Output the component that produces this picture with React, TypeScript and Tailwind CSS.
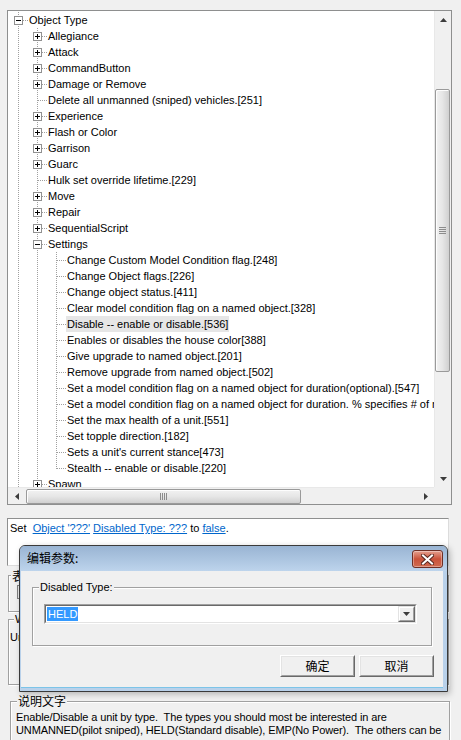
import React from "react";

type Row = { t: string; l: number; e?: "plus" | "minus"; last?: boolean; sel?: boolean };

const level2 = [
  "Change Custom Model Condition flag.[248]",
  "Change Object flags.[226]",
  "Change object status.[411]",
  "Clear model condition flag on a named object.[328]",
  "Disable -- enable or disable.[536]",
  "Enables or disables the house color[388]",
  "Give upgrade to named object.[201]",
  "Remove upgrade from named object.[502]",
  "Set a model condition flag on a named object for duration(optional).[547]",
  "Set a model condition flag on a named object for duration. % specifies # of repetitions.[548]",
  "Set the max health of a unit.[551]",
  "Set topple direction.[182]",
  "Sets a unit's current stance[473]",
  "Stealth -- enable or disable.[220]",
];

const rows: Row[] = [
  { t: "Object Type", l: 0, e: "minus" },
  { t: "Allegiance", l: 1, e: "plus" },
  { t: "Attack", l: 1, e: "plus" },
  { t: "CommandButton", l: 1, e: "plus" },
  { t: "Damage or Remove", l: 1, e: "plus" },
  { t: "Delete all unmanned (sniped) vehicles.[251]", l: 1 },
  { t: "Experience", l: 1, e: "plus" },
  { t: "Flash or Color", l: 1, e: "plus" },
  { t: "Garrison", l: 1, e: "plus" },
  { t: "Guarc", l: 1, e: "plus" },
  { t: "Hulk set override lifetime.[229]", l: 1 },
  { t: "Move", l: 1, e: "plus" },
  { t: "Repair", l: 1, e: "plus" },
  { t: "SequentialScript", l: 1, e: "plus" },
  { t: "Settings", l: 1, e: "minus" },
  ...level2.map((t, i) => ({
    t,
    l: 2,
    last: i === level2.length - 1,
    sel: i === 4,
  })),
  { t: "Spawn", l: 1, e: "plus" },
];

const DOT = { stroke: "#a0a0a0", strokeDasharray: "1 1", shapeRendering: "crispEdges" as const };

function Cell({ kind, exp }: { kind: "pass" | "tee" | "elbow"; exp?: "plus" | "minus" }) {
  return (
    <svg width={19} height={16} className="block shrink-0">
      {kind === "pass" && <line x1="9.5" y1="0" x2="9.5" y2="16" {...DOT} />}
      {kind !== "pass" && (
        <>
          <line x1="9.5" y1="0" x2="9.5" y2={kind === "tee" ? 16 : 9} {...DOT} />
          <line x1="10" y1="8.5" x2="19" y2="8.5" {...DOT} />
        </>
      )}
      {exp && (
        <>
          <rect x="5.5" y="4.5" width="8" height="8" fill="#fff" stroke="#919191" shapeRendering="crispEdges" />
          <line x1="7" y1="8.5" x2="12" y2="8.5" stroke="#000" shapeRendering="crispEdges" />
          {exp === "plus" && <line x1="9.5" y1="6" x2="9.5" y2="11" stroke="#000" shapeRendering="crispEdges" />}
        </>
      )}
    </svg>
  );
}

function TreeRow({ r }: { r: Row }) {
  const cells = [];
  for (let i = 0; i < r.l; i++) cells.push(<Cell key={i} kind="pass" />);
  cells.push(<Cell key="own" kind={r.last ? "elbow" : "tee"} exp={r.e} />);
  return (
    <div className="flex h-4 items-stretch whitespace-nowrap">
      {cells}
      <span className={`px-px leading-[16px] ${r.sel ? "bg-[#e6e6e6]" : ""}`}>{r.t}</span>
    </div>
  );
}

function Tri({ dir }: { dir: "up" | "down" | "left" | "right" }) {
  const pts =
    dir === "up"
      ? "0,4 7,4 3.5,0"
      : dir === "down"
      ? "0,0 7,0 3.5,4"
      : dir === "left"
      ? "4,0 4,7 0,3.5"
      : "0,0 0,7 4,3.5";
  const w = dir === "up" || dir === "down" ? 7 : 4;
  const h = dir === "up" || dir === "down" ? 4 : 7;
  return (
    <svg width={w} height={h} className="block">
      <polygon points={pts} fill="#3c3c3c" />
    </svg>
  );
}

function VScroll() {
  return (
    <div className="flex flex-col w-[17px] bg-[#f0f0f0] border-l border-[#e8e8e8]">
      <div className="h-[17px] flex items-center justify-center">
        <Tri dir="up" />
      </div>
      <div className="flex-1 flex flex-col">
        <div className="h-[61px]" />
        <div className="h-[283px] w-[15px] rounded-[2px] border border-[#9a9a9a] bg-gradient-to-r from-[#f2f2f2] via-[#e6e6e6] to-[#d0d0d0] shadow-[inset_1px_1px_0_#fdfdfd] flex items-center justify-center">
          <svg width={7} height={8} className="block">
            {[0, 2, 4, 6].map((y) => (
              <line key={y} x1="0" y1={y + 0.5} x2="7" y2={y + 0.5} stroke="#8c8c8c" />
            ))}
          </svg>
        </div>
      </div>
      <div className="h-[17px] flex items-center justify-center">
        <Tri dir="down" />
      </div>
    </div>
  );
}

function HScroll() {
  return (
    <div className="flex h-[17px] bg-[#f0f0f0] border-t border-[#e8e8e8]">
      <div className="w-[17px] flex items-center justify-center">
        <Tri dir="left" />
      </div>
      <div className="flex-1 flex items-center">
        <div className="ml-px w-[275px] h-[15px] rounded-[2px] border border-[#9a9a9a] bg-gradient-to-b from-[#f2f2f2] via-[#e6e6e6] to-[#d0d0d0] shadow-[inset_1px_1px_0_#fdfdfd] flex items-center justify-center">
          <svg width={8} height={7} className="block">
            {[0, 2, 4, 6].map((x) => (
              <line key={x} x1={x + 0.5} y1="0" x2={x + 0.5} y2="7" stroke="#8c8c8c" />
            ))}
          </svg>
        </div>
      </div>
      <div className="w-[17px] flex items-center justify-center">
        <Tri dir="right" />
      </div>
    </div>
  );
}

function TreeBox() {
  return (
    <div className="w-[445px] h-[495px] border border-[#8e8f8f] bg-white grid grid-cols-[426px_17px] grid-rows-[476px_17px]">
      <div className="overflow-hidden pt-px pl-px">
        {rows.map((r, i) => (
          <TreeRow key={i} r={r} />
        ))}
      </div>
      <VScroll />
      <HScroll />
      <div className="bg-[#f0f0f0]" />
    </div>
  );
}

const CJK = "font-['Noto_Sans_CJK_SC',sans-serif]";

function Dialog() {
  return (
    <div className="absolute left-[19px] top-[545px] w-[429px] h-[147px] border border-[#3a3a3a] rounded-t-[6px] bg-[#b9d1ea] flex flex-col shadow-[2px_2px_6px_rgba(0,0,0,0.25)]">
      <div className="h-[25px] flex items-start rounded-t-[5px] bg-gradient-to-b from-[#99b4d3] to-[#bdd4ec]">
        <div className={`${CJK} text-[12px] leading-[16px] mt-[4px] ml-[7px] text-black`}>编辑参数:</div>
        <div className="ml-auto mr-[4px] mt-[4px] w-[31px] h-[18px] rounded-[3px] border border-[#6e2f25] bg-gradient-to-b from-[#e4a08f] via-[#c9523a] to-[#d06a4f] shadow-[inset_0_0_0_1px_rgba(255,255,255,0.35)] flex items-center justify-center">
          <svg width={13} height={11} className="block">
            <path d="M2 1.5 L11 9.5 M11 1.5 L2 9.5" stroke="#5a2a22" strokeWidth={4} strokeLinecap="square" />
            <path d="M2 1.5 L11 9.5 M11 1.5 L2 9.5" stroke="#ffffff" strokeWidth={2} strokeLinecap="square" />
          </svg>
        </div>
      </div>
      <div className="ml-[1px] mr-[4px] mb-[3px] flex-1 bg-[#f0f0f0] border-b border-[#7cc4e8] flex flex-col">
        <fieldset className="ml-[11px] mt-[10px] w-[400px] border border-[#a0a0a0] shadow-[1px_1px_0_#fff,inset_1px_1px_0_#fff] pt-[10px] pb-[21px]">
          <legend className="ml-[6px] px-px leading-[13px] bg-[#f0f0f0]">Disabled Type:</legend>
          <div className="ml-[11px] w-[373px] h-[20px] border border-t-[#a0a0a0] border-l-[#a0a0a0] border-b-white border-r-white">
            <div className="h-full border border-t-[#696969] border-l-[#696969] border-b-[#e3e3e3] border-r-[#e3e3e3] bg-white flex items-center">
              <span className="ml-px h-[14px] leading-[14px] px-px bg-[#3399ff] text-white">HELD</span>
              <div className="ml-auto h-full w-[17px] border border-t-[#e3e3e3] border-l-[#e3e3e3] border-b-[#696969] border-r-[#696969]">
                <div className="h-full border border-t-white border-l-white border-b-[#a0a0a0] border-r-[#a0a0a0] bg-[#f0f0f0] flex items-center justify-center">
                  <Tri dir="down" />
                </div>
              </div>
            </div>
          </div>
        </fieldset>
        <div className="flex justify-end gap-[4px] mt-[9px] mr-[9px]">
          {["确定", "取消"].map((b) => (
            <div key={b} className="w-[75px] h-[22px] border border-t-white border-l-white border-b-[#696969] border-r-[#696969]">
              <div className={`h-full border border-t-[#e3e3e3] border-l-[#e3e3e3] border-b-[#a0a0a0] border-r-[#a0a0a0] bg-[#f0f0f0] flex items-center justify-center ${CJK} text-[12px]`}>
                {b}
              </div>
            </div>
          ))}
        </div>
      </div>
    </div>
  );
}

export default function App() {
  return (
    <div className="relative w-[461px] h-[740px] overflow-hidden bg-[#f0f0f0] font-['Liberation_Sans',Arial,sans-serif] text-[11px] text-black">
      <div className="flex flex-col pl-[7px] pt-[10px]">
        <TreeBox />
        <div className="mt-[13px] w-[442px] h-[48px] bg-white border border-t-[#8e8f8f] border-l-[#8e8f8f] border-b-[#dcdcdc] border-r-[#dcdcdc] pl-[2px] pt-[3px] leading-[13px] whitespace-pre">
          {"Set  "}
          <span className="text-[#0066cc] underline">Object '???'</span>{" "}
          <span className="text-[#0066cc] underline">Disabled Type: ???</span>
          {" to "}
          <span className="text-[#0066cc] underline">false</span>.
        </div>
        <fieldset className="ml-px mt-[3px] w-[441px] h-[43px] border border-[#a0a0a0] shadow-[1px_1px_0_#fff,inset_1px_1px_0_#fff] pt-[3px]">
          <legend className={`ml-[2px] px-px leading-[13px] ${CJK} text-[12px] bg-[#f0f0f0]`}>表达式</legend>
          <div className="ml-[8px] w-[420px] h-[14px] border border-[#808080] bg-[#e8e8e8]" />
        </fieldset>
        <fieldset className="ml-px mt-[1px] w-[441px] h-[72px] border border-[#a0a0a0] shadow-[1px_1px_0_#fff,inset_1px_1px_0_#fff] pt-[5px]">
          <legend className="ml-[5px] px-px leading-[13px] bg-[#f0f0f0]">Warnings</legend>
          <div className="ml-px leading-[13px]">Unknown</div>
        </fieldset>
        <fieldset className="ml-[3px] mt-[8px] w-[440px] h-[60px] border border-[#a0a0a0] shadow-[1px_1px_0_#fff,inset_1px_1px_0_#fff] pt-[2px]">
          <legend className={`ml-[6px] px-px leading-[16px] ${CJK} text-[12px] bg-[#f0f0f0]`}>说明文字</legend>
          <div className="ml-[5px] leading-[13px] whitespace-pre tracking-[-0.12px]">
            {"Enable/Disable a unit by type.  The types you should most be interested in are\nUNMANNED(pilot sniped), HELD(Standard disable), EMP(No Power).  The others can be"}
          </div>
        </fieldset>
      </div>
      <Dialog />
    </div>
  );
}
